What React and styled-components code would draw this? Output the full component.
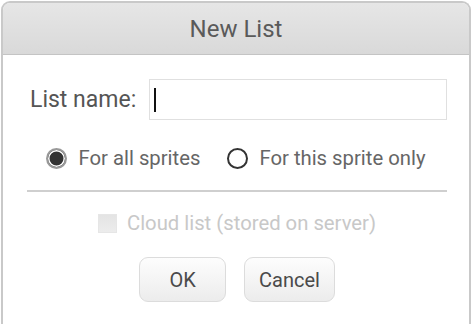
import React from "react";
import styled, { createGlobalStyle } from "styled-components";

const Global = createGlobalStyle`
  html, body { margin: 0; padding: 0; background: #ffffff; }
  body { font-family: Roboto, "Noto Sans", sans-serif; }
`;

const Dialog = styled.div`
  box-sizing: border-box;
  height: 340px;
  margin: 1px 0 0 1px;
  width: 470px;
  border: 2px solid #c9c9c9;
  border-bottom: none;
  border-radius: 9px 9px 0 0;
  background: #fff;
  overflow: hidden;
`;

const Header = styled.div`
  height: 51px;
  background: linear-gradient(#e6e6e6, #d9d9d9);
  border-bottom: 1px solid #c4c4c4;
  display: flex;
  align-items: center;
  justify-content: center;
  font-size: 24px;
  color: #5a5a5a;
`;

const Body = styled.div`
  padding: 24px 22px 0 24px;
  display: flex;
  flex-direction: column;
`;

const NameRow = styled.div`
  display: flex;
  align-items: center;
  gap: 13px;
  padding-left: 3px;
`;

const Label = styled.label`
  font-size: 23px;
  color: #555;
  white-space: nowrap;
  flex-shrink: 0;
`;

const Input = styled.div`
  box-sizing: border-box;
  flex: 1;
  height: 41px;
  border: 1px solid #e0e0e0;
  display: flex;
  align-items: center;
  padding-left: 4px;
`;

const Caret = styled.span`
  width: 2px;
  height: 24px;
  background: #111;
`;

const RadioRow = styled.div`
  display: flex;
  justify-content: center;
  align-items: center;
  gap: 27px;
  margin-top: 26px;
  margin-left: -2px;
  white-space: nowrap;
`;

const Choice = styled.div`
  display: flex;
  align-items: center;
  gap: 11px;
  font-size: 20.3px;
  color: #666;
`;

const Radio = styled.span`
  box-sizing: border-box;
  width: 21px;
  height: 21px;
  border-radius: 50%;
  border: 2px solid ${(p) => (p.$on ? "#999" : "#333")};
  background: ${(p) => (p.$on ? "#333" : "#fff")};
  box-shadow: ${(p) => (p.$on ? "inset 0 0 0 1.5px #fff" : "none")};
`;

const Divider = styled.div`
  height: 2px;
  background: #cfcfcf;
  margin: 20px 0 0 0;
`;

const CloudRow = styled.div`
  display: flex;
  justify-content: center;
  align-items: center;
  gap: 10px;
  margin-top: 19px;
  font-size: 20.3px;
  color: #c8c8c8;
`;

const Check = styled.span`
  box-sizing: border-box;
  width: 19px;
  height: 19px;
  background: linear-gradient(#e4e4e4, #ececec);
  border: 1px solid #e6e6e6;
`;

const Buttons = styled.div`
  display: flex;
  justify-content: center;
  gap: 18px;
  margin-top: 22px;
  margin-left: 0;
`;

const Button = styled.button`
  box-sizing: border-box;
  height: 45px;
  min-width: ${(p) => p.$w}px;
  border: 1px solid #dcdcdc;
  border-radius: 9px;
  background: linear-gradient(#fdfdfd, #ececec);
  font-family: Roboto, "Noto Sans", sans-serif;
  font-size: 20px;
  color: #4a4a4a;
  padding: 0 14px;
`;

export default function App() {
  return (
    <>
      <Global />
      <Dialog>
        <Header>New List</Header>
        <Body>
          <NameRow>
            <Label>List name:</Label>
            <Input>
              <Caret />
            </Input>
          </NameRow>
          <RadioRow>
            <Choice>
              <Radio $on />
              For all sprites
            </Choice>
            <Choice>
              <Radio />
              For this sprite only
            </Choice>
          </RadioRow>
          <Divider />
          <CloudRow>
            <Check />
            Cloud list (stored on server)
          </CloudRow>
          <Buttons>
            <Button $w={87}>OK</Button>
            <Button $w={89}>Cancel</Button>
          </Buttons>
        </Body>
      </Dialog>
    </>
  );
}
